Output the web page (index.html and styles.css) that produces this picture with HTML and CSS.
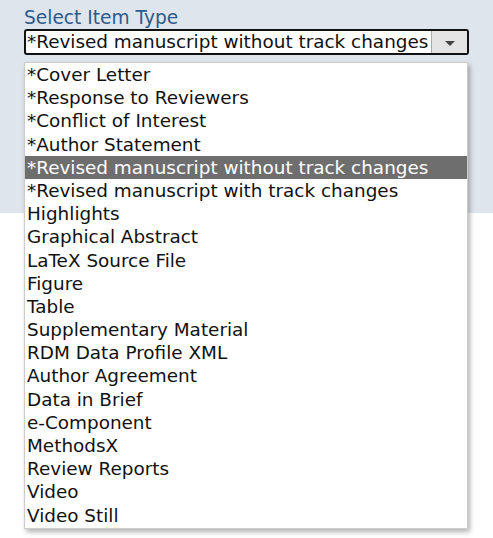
FILE: index.html
```html
<!DOCTYPE html>
<html lang="en">
<head>
    <meta charset="UTF-8">
    <title>Select Item Type</title>
    <link rel="stylesheet" href="styles.css">
</head>
<body>
    <div class="field">
        <label class="field-label">Select Item Type</label>
        <div class="select-box">
            <span class="select-value">*Revised manuscript without track changes</span>
            <span class="select-btn"><span class="caret"></span></span>
        </div>
        <ul class="options">
            <li>*Cover Letter</li>
            <li>*Response to Reviewers</li>
            <li>*Conflict of Interest</li>
            <li>*Author Statement</li>
            <li class="selected">*Revised manuscript without track changes</li>
            <li>*Revised manuscript with track changes</li>
            <li>Highlights</li>
            <li>Graphical Abstract</li>
            <li>LaTeX Source File</li>
            <li>Figure</li>
            <li>Table</li>
            <li>Supplementary Material</li>
            <li>RDM Data Profile XML</li>
            <li>Author Agreement</li>
            <li>Data in Brief</li>
            <li>e-Component</li>
            <li>MethodsX</li>
            <li>Review Reports</li>
            <li>Video</li>
            <li>Video Still</li>
        </ul>
    </div>
</body>
</html>
```

FILE: styles.css
```css
html { background: #fff; }
body { margin: 0; min-height: 538px; font-family: "DejaVu Sans", Verdana, sans-serif; background: linear-gradient(#dfe5ed 0, #dfe5ed 213px, #fff 213px); }
.field { padding: 7px 0 0 24px; width: 445px; }
.field-label { display: block; color: #2c5b8c; font-size: 18.6px; line-height: 21px; margin-bottom: 1px; }
.select-box { display: flex; height: 26px; border: 2px solid #111; border-radius: 3px; background: #fff; box-sizing: border-box; overflow: hidden; }
.select-value { flex: 1; font-size: 18.4px; line-height: 22px; padding-left: 1px; color: #111; white-space: nowrap; overflow: hidden; }
.select-btn { width: 35px; flex: none; background: #e4e4e4; border-left: 1px solid #aaa; display: flex; align-items: center; justify-content: center; }
.caret { width: 0; height: 0; border-left: 5px solid transparent; border-right: 5px solid transparent; border-top: 5px solid #444; margin-top: 2px; }
.options { width: 444px; box-sizing: border-box; margin: 7px 0 0; padding: 0 0 1px; list-style: none; background: #fff; border: 1px solid #ccc; box-shadow: 2px 3px 5px rgba(0,0,0,0.3); }
.options li { font-size: 18.4px; line-height: 23.2px; height: 23.2px; padding-left: 2px; color: #111; white-space: nowrap; }
.options li.selected { background: #6e6e6e; color: #fff; }
```
